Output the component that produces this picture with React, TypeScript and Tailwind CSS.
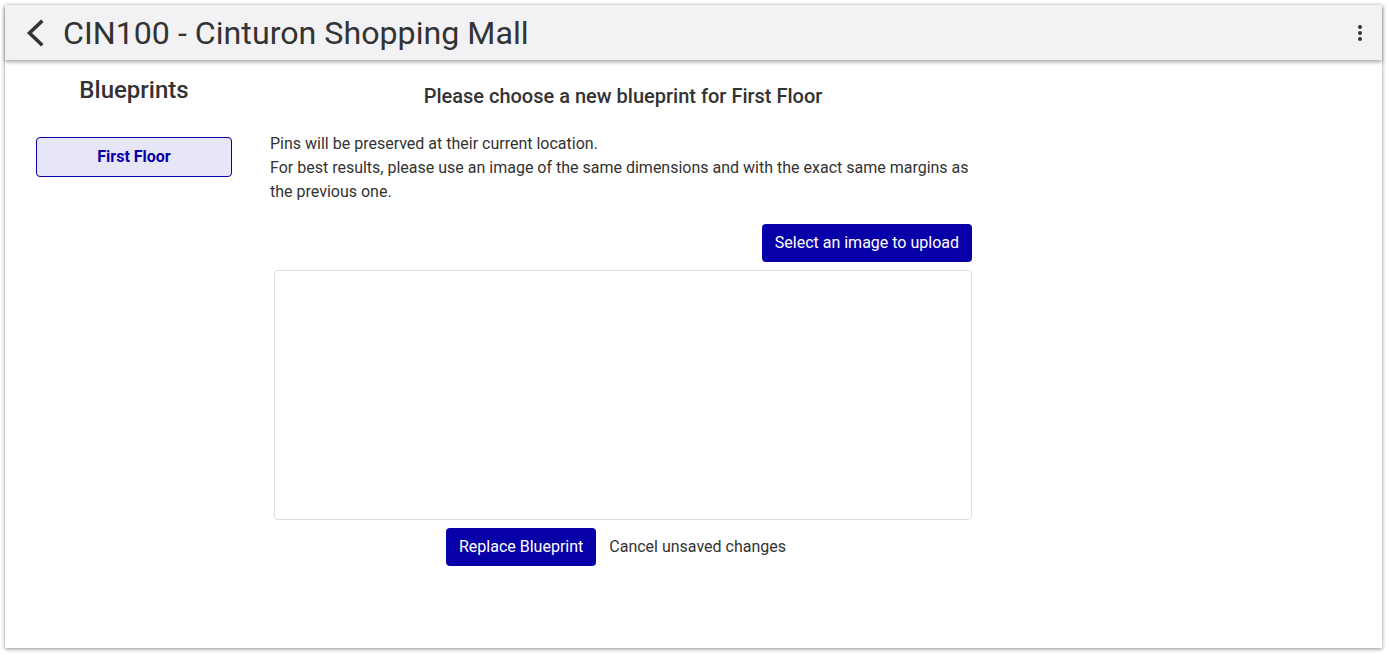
import React from "react";

const font = { fontFamily: "Roboto, 'Noto Sans', sans-serif" };

function BackIcon() {
  return (
    <svg width="22" height="28" viewBox="0 0 22 28" className="shrink-0">
      <polyline points="16,3 4.5,14 16,25" fill="none" stroke="#333" strokeWidth="3.6" strokeLinecap="square" />
    </svg>
  );
}

function KebabIcon() {
  return (
    <svg width="6" height="18" viewBox="0 0 6 18">
      <circle cx="3" cy="3" r="2" fill="#333" />
      <circle cx="3" cy="9" r="2" fill="#333" />
      <circle cx="3" cy="15" r="2" fill="#333" />
    </svg>
  );
}

export default function App() {
  return (
    <div className="w-full h-[655px] bg-white pl-[5px] pt-[5px]" style={font}>
      <div className="w-[1377px] h-[643px] bg-white shadow-[0_1px_4px_rgba(0,0,0,0.45)] flex flex-col">
        {/* Header */}
        <div className="h-[55px] bg-[#f2f2f4] shadow-[0_2px_4px_rgba(0,0,0,0.35)] flex items-center pl-[20px] pr-[19px] relative z-10">
          <BackIcon />
          <h1 className="ml-[16px] mt-[2px] text-[32.2px] leading-none text-[#333]">CIN100 - Cinturon Shopping Mall</h1>
          <div className="ml-auto flex items-center">
            <KebabIcon />
          </div>
        </div>

        {/* Body */}
        <div className="flex flex-1">
          <aside className="w-[258px] px-[31px] pt-[16px] flex flex-col">
            <h2 className="text-center text-[24px] leading-[28px] font-medium text-[#333]">Blueprints</h2>
            <button className="mt-[33px] h-[40px] w-full rounded-[4px] border border-[#0700a8] bg-[#e6e6f6] text-[16px] font-bold text-[#0700a8]">
              First Floor
            </button>
          </aside>

          <main className="w-[709px] pl-[7px] pt-[22px] flex flex-col">
            <h3 className="text-center text-[20px] leading-[28px] font-medium text-[#333] pl-[4px]">
              Please choose a new blueprint for First Floor
            </h3>
            <p className="mt-[22px] text-[16px] leading-[24px] text-[#333]">
              Pins will be preserved at their current location.
              <br />
              For best results, please use an image of the same dimensions and with the exact same margins as the previous one.
            </p>
            <div className="mt-[20px] flex justify-end">
              <button className="h-[38px] px-[13px] rounded-[4px] bg-[#0700a8] text-white text-[16px]">
                Select an image to upload
              </button>
            </div>
            <div className="mt-[8px] ml-[4px] h-[250px] rounded-[4px] border border-[#dedede]" />
            <div className="mt-[8px] flex items-center justify-center gap-[13px] pr-[10px]">
              <button className="h-[38px] px-[13px] rounded-[4px] bg-[#0700a8] text-white text-[16px]">
                Replace Blueprint
              </button>
              <span className="text-[16px] text-[#333]">Cancel unsaved changes</span>
            </div>
          </main>
        </div>
      </div>
    </div>
  );
}
